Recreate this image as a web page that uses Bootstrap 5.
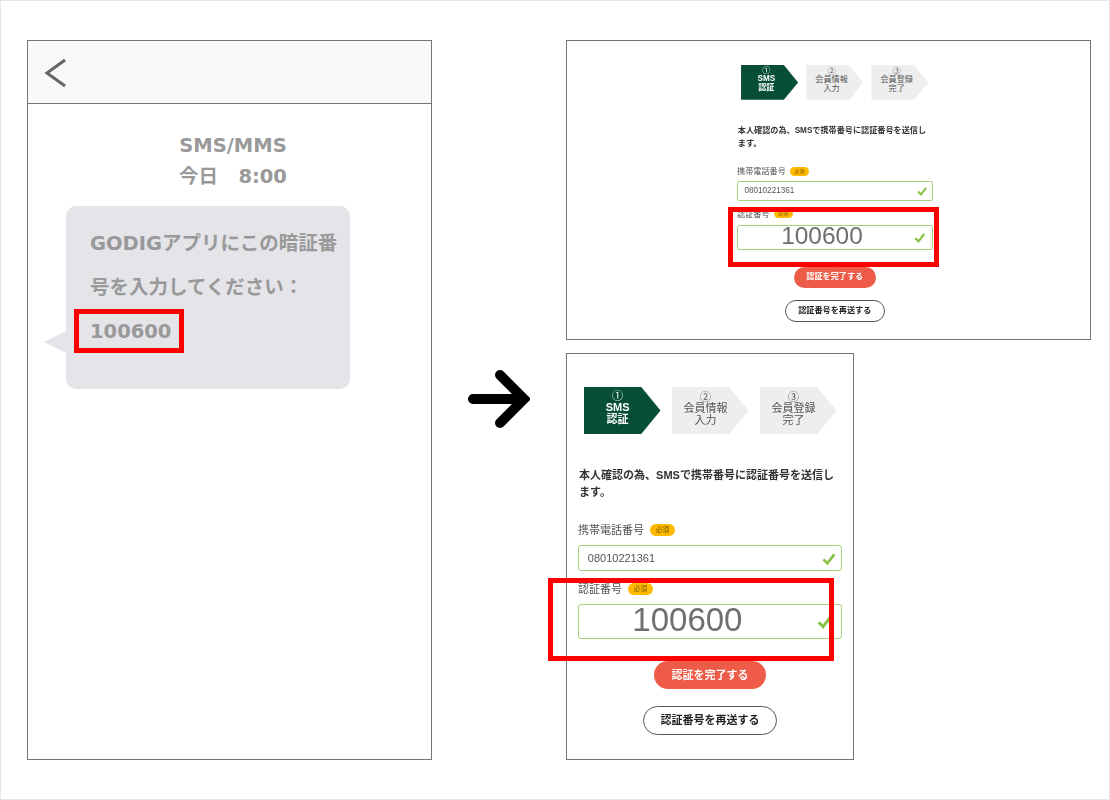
<!DOCTYPE html>
<html lang="ja">
<head>
  <meta charset="UTF-8">
  <meta name="viewport" content="width=device-width, initial-scale=1.0">
  <title>SMS認証</title>
  <link href="https://cdn.jsdelivr.net/npm/bootstrap@5.3.0/dist/css/bootstrap.min.css" rel="stylesheet">
  <style>
    body { margin: 0; background: #fff; font-family: "Liberation Sans", "Noto Sans CJK JP", sans-serif; }
    .sheet { width: 1110px; height: 800px; border: 1px solid #e6e6e6; padding: 39px 18px 39px 26px; }
    .pane { border: 1px solid #757575; background: #fff; }

    /* left phone */
    .phone { width: 405px; height: 720px; font-family: "DejaVu Sans", "Noto Sans CJK JP", sans-serif; font-weight: 700; color: #999; }
    .phone-bar { height: 63px; background: #f9f9f9; border-bottom: 1px solid #757575; padding: 17px 0 0 16px; }
    .phone-head { margin: 26px 0 0; font-size: 19.5px; line-height: 31px; text-align: center; width: 410px; }
    .bubble { position: relative; width: 284px; height: 183px; margin: 14px 0 0 38px; padding: 16px 0 0 24px; background: #e4e4e9; border-radius: 10px; font-size: 19.5px; line-height: 44px; white-space: nowrap; }
    .bubble::before { content: ""; position: absolute; left: -22px; top: 125px; border-style: solid; border-width: 11px 22px 11px 0; border-color: transparent #e4e4e9 transparent transparent; }
    .code-hit { position: absolute; left: 8px; top: 103px; width: 110px; height: 44px; border: 5px solid #f00; }

    .arrow-col { width: 134px; }
    .right-col { width: 525px; gap: 13px; }

    /* sign-up form, sized in em so both captures share it */
    .wiz-wide { width: 525px; height: 300px; padding: 24px 0 0 170px; }
    .wiz-wide .wiz { font-size: 8.15px; }
    .wiz-tall { width: 288px; height: 407px; padding: 33px 0 0 11px; }
    .wiz-tall .wiz { font-size: 11px; }
    .wiz { width: 24em; color: #333; }
    .steps { display: flex; gap: 1em; margin-left: .5em; }
    .step { flex: 0 0 7em; height: 4.27em; padding: .25em .8em 0 0; background: #eee; color: #555; text-align: center; line-height: 1.1; clip-path: polygon(0 0, 75% 0, 100% 50%, 75% 100%, 0 100%); white-space: nowrap; }
    .step-on { background: #064e35; color: #fff; font-weight: 700; padding-top: .15em; }
    .step-num { display: block; height: 1.1em; font-family: "Noto Sans CJK JP", sans-serif; font-weight: 400; }
    .lead-txt { margin: 3.03em 0 0 .1em; font-size: 1em; font-weight: 700; line-height: 1.55; color: #333; width: 23.6em; }
    .wiz-wide .lead-txt { margin-top: 3.15em; }
    .fld-label { margin: 2em 0 .55em; line-height: 1.45; color: #555; display: flex; align-items: center; gap: .5em; }
    .wiz-wide .fld-label { margin-top: 1.9em; margin-bottom: .4em; }
    .fld-label-next, .wiz-wide .fld-label-next { margin-top: 1em; margin-bottom: .5em; }
    .req { font-size: .62em; font-weight: 400; padding: .25em .9em; background: #ffb900 !important; color: #7a5a00; line-height: 1.3; margin-top: -.4em; }
    .fld { position: relative; height: 2.36em; padding: 0 .8em; border: 1px solid #a5cf7c; border-radius: .27em; font-size: 1em; line-height: 2.2em; color: #555; background: #fff; }
    .fld-code { height: 3.18em; padding-left: 4.85em; font-size: 1em; line-height: 1; }
    .wiz-wide .fld-code { padding-left: 5.3em; }
    .fld-code span { font-size: 3em; line-height: .9em; color: #6f6f6f; display: block; }
    .wiz-wide .fld-code span { line-height: .84em; }
    .tick { position: absolute; right: .5em; top: 50%; width: 1.25em; height: 1.25em; margin-top: -.62em; }
    .fld-code .tick { right: .8em; width: 1.4em; height: 1.4em; margin-top: -.7em; }
    .tick path { fill: none; stroke: #8bc34a; stroke-width: 2.8; }
    .btn-done, .btn-again { display: block; margin: 0 auto; padding: 0; font-size: 1em; font-weight: 700; }
    .btn-done { width: 10.1em; height: 2.55em; margin-top: 2em; background: #ee5c49; border: 0; color: #fff; line-height: 2.55em; }
    .btn-again { width: 12.2em; height: 2.64em; margin-top: 1.55em; background: #fff; border: 1px solid #555; color: #222; line-height: 2.5em; }
    .code-box { position: relative; }
    .code-hit-b { position: absolute; border: 5px solid #f00; pointer-events: none; }
    .wiz-tall .code-hit-b { left: -30px; top: -4px; width: 286px; height: 83px; }
    .wiz-wide .code-hit-b { left: -9px; top: -2px; width: 211px; height: 60px; }

    /* the captures in the picture are scaled down and soft */
    .wiz-wide .steps, .wiz-wide .lead-txt, .wiz-wide .fld-label, .wiz-wide .fld, .wiz-wide .btn { filter: blur(.35px); }
    .wiz-tall .steps, .wiz-tall .lead-txt, .wiz-tall .fld-label, .wiz-tall .fld, .wiz-tall .btn { filter: blur(.2px); }
  </style>
</head>
<body>
  <div class="sheet d-flex">
    <div class="pane phone flex-shrink-0">
      <div class="phone-bar">
        <svg width="24" height="30" viewBox="0 0 24 30"><path d="M21 2 L3 15 L21 28" fill="none" stroke="#666" stroke-width="3"/></svg>
      </div>
      <div class="phone-head">SMS/MMS<br>今日&nbsp;&nbsp; 8:00</div>
      <div class="bubble">
        GODIGアプリにこの暗証番<br>号を入力してください：<br>100600
        <div class="code-hit"></div>
      </div>
    </div>

    <div class="arrow-col d-flex align-items-center justify-content-center flex-shrink-0">
      <svg width="62" height="62" viewBox="0 0 62 62">
        <path d="M5 30 H55 M32 6 L56 30 L32 54" fill="none" stroke="#000" stroke-width="10" stroke-linecap="round" stroke-linejoin="miter"/>
      </svg>
    </div>

    <div class="right-col d-flex flex-column flex-shrink-0">
      <div class="pane wiz-wide">
        <div class="wiz">
          <div class="steps">
            <div class="step step-on"><span class="step-num">①</span>SMS<br>認証</div>
            <div class="step"><span class="step-num">②</span>会員情報<br>入力</div>
            <div class="step"><span class="step-num">③</span>会員登録<br>完了</div>
          </div>
          <p class="lead-txt">本人確認の為、SMSで携帯番号に認証番号を送信します。</p>
          <div class="fld-label">携帯電話番号 <span class="badge rounded-pill req">必須</span></div>
          <div class="fld">08010221361
            <svg class="tick" viewBox="0 0 14 14"><path d="M1.5 7.5 L5.5 11.5 L12.5 2.5"/></svg>
          </div>
          <div class="code-box">
            <div class="fld-label fld-label-next">認証番号 <span class="badge rounded-pill req">必須</span></div>
            <div class="fld fld-code"><span>100600</span>
              <svg class="tick" viewBox="0 0 14 14"><path d="M1.5 7.5 L5.5 11.5 L12.5 2.5"/></svg>
            </div>
            <div class="code-hit-b"></div>
          </div>
          <button class="btn btn-done rounded-pill">認証を完了する</button>
          <button class="btn btn-again rounded-pill">認証番号を再送する</button>
        </div>
      </div>

      <div class="pane wiz-tall">
        <div class="wiz">
          <div class="steps">
            <div class="step step-on"><span class="step-num">①</span>SMS<br>認証</div>
            <div class="step"><span class="step-num">②</span>会員情報<br>入力</div>
            <div class="step"><span class="step-num">③</span>会員登録<br>完了</div>
          </div>
          <p class="lead-txt">本人確認の為、SMSで携帯番号に認証番号を送信します。</p>
          <div class="fld-label">携帯電話番号 <span class="badge rounded-pill req">必須</span></div>
          <div class="fld">08010221361
            <svg class="tick" viewBox="0 0 14 14"><path d="M1.5 7.5 L5.5 11.5 L12.5 2.5"/></svg>
          </div>
          <div class="code-box">
            <div class="fld-label fld-label-next">認証番号 <span class="badge rounded-pill req">必須</span></div>
            <div class="fld fld-code"><span>100600</span>
              <svg class="tick" viewBox="0 0 14 14"><path d="M1.5 7.5 L5.5 11.5 L12.5 2.5"/></svg>
            </div>
            <div class="code-hit-b"></div>
          </div>
          <button class="btn btn-done rounded-pill">認証を完了する</button>
          <button class="btn btn-again rounded-pill">認証番号を再送する</button>
        </div>
      </div>
    </div>
  </div>
  <script src="https://cdn.jsdelivr.net/npm/bootstrap@5.3.0/dist/js/bootstrap.bundle.min.js"></script>
</body>
</html>
